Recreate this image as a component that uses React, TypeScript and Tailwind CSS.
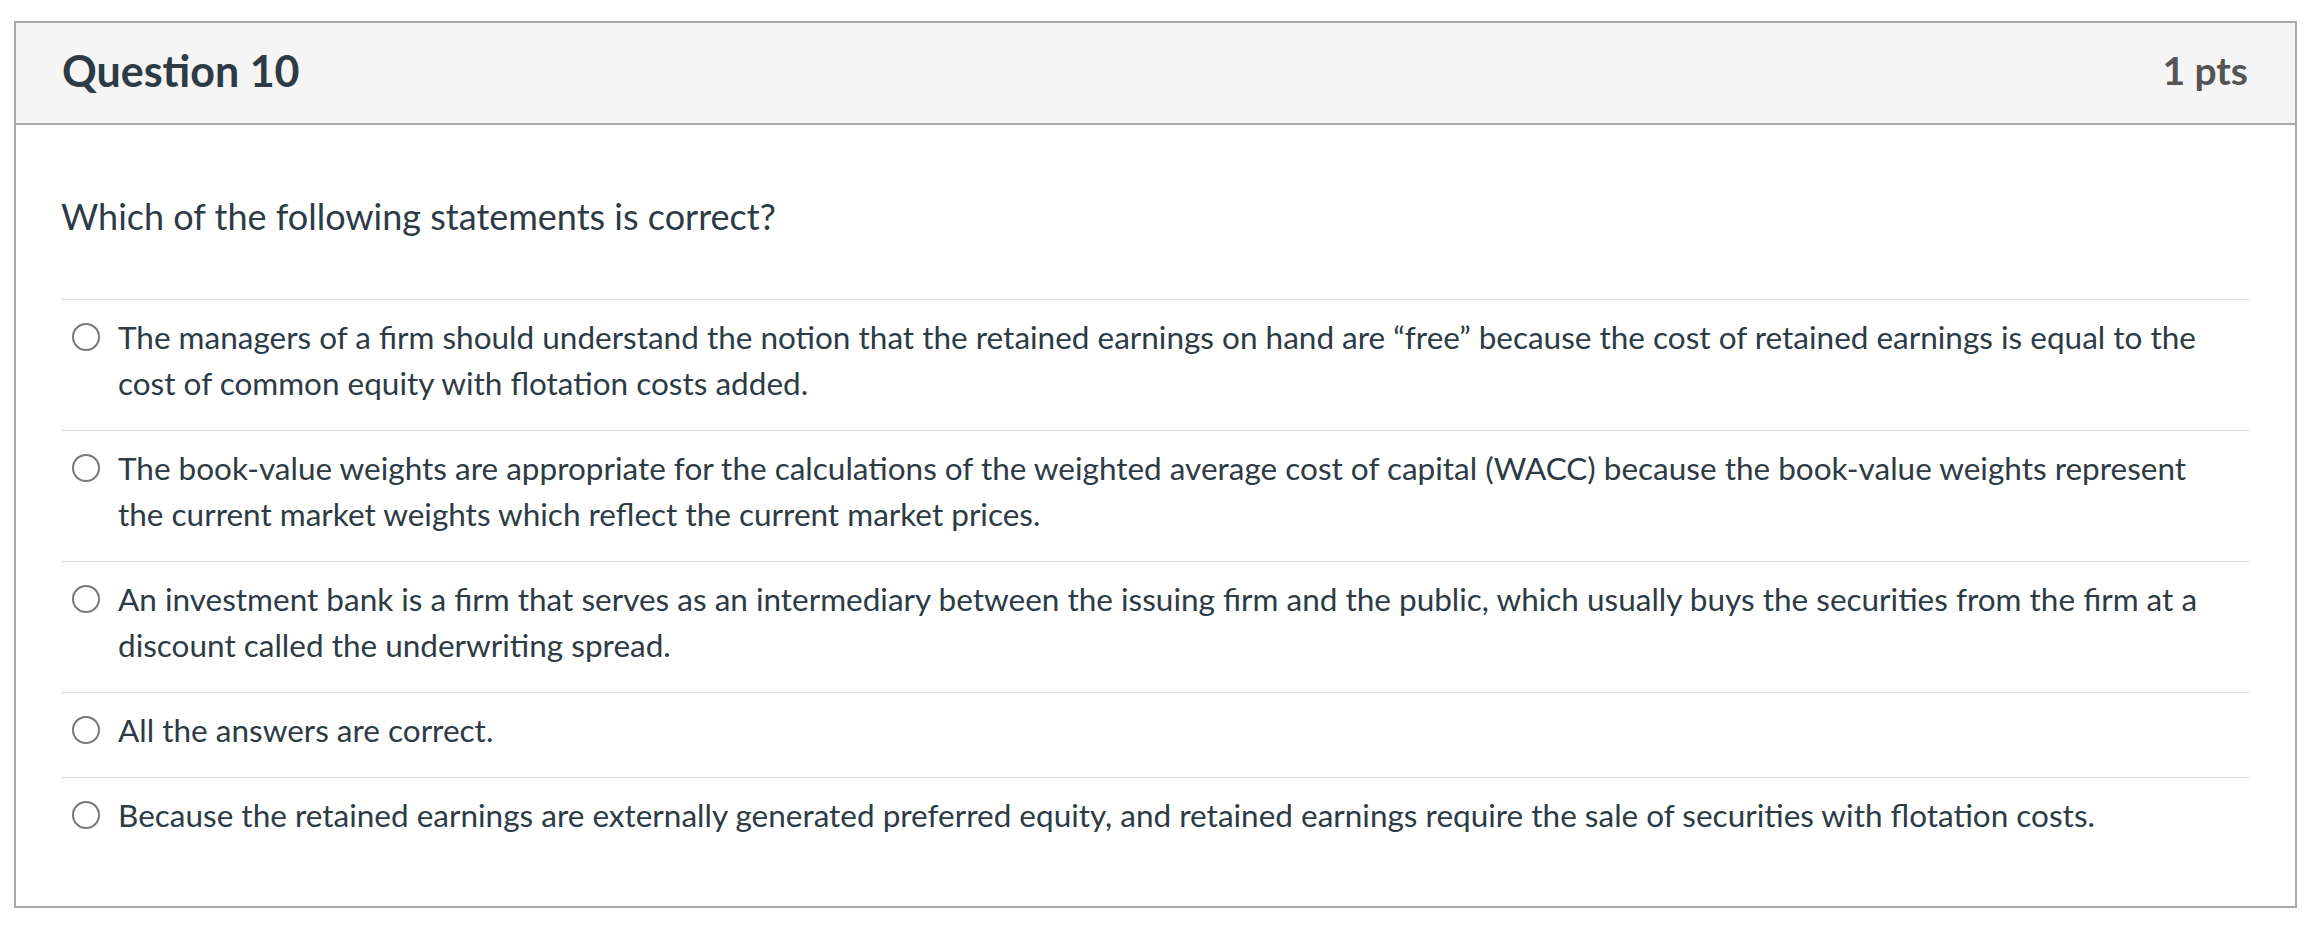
const answers = [
  "The managers of a firm should understand the notion that the retained earnings on hand are \u201cfree\u201d because the cost of retained earnings is equal to the cost of common equity with flotation costs added.",
  "The book-value weights are appropriate for the calculations of the weighted average cost of capital (WACC) because the book-value weights represent the current market weights which reflect the current market prices.",
  "An investment bank is a firm that serves as an intermediary between the issuing firm and the public, which usually buys the securities from the firm at a discount called the underwriting spread.",
  "All the answers are correct.",
  "Because the retained earnings are externally generated preferred equity, and retained earnings require the sale of securities with flotation costs.",
];

const Radio = () => (
  <span className="mt-[9px] h-[28px] w-[28px] shrink-0 rounded-full border-2 border-[#777777] bg-white" />
);

export default function App() {
  return (
    <div
      className="min-h-screen bg-white pl-[14px] pt-[21px] text-[#2d3b45]"
      style={{ fontFamily: "Lato, 'Open Sans', sans-serif" }}
    >
      <div className="w-[2283px] h-[887px] border-2 border-[#a9a9a9] bg-white">
        <div className="flex h-[102px] items-center justify-between border-b-2 border-[#a9a9a9] bg-[#f5f5f5] pl-[46px] pr-[47px] pb-[6px]">
          <h2 className="text-[43px] font-bold leading-none">Question 10</h2>
          <span className="text-[39px] font-bold leading-none text-[#555555]">1 pts</span>
        </div>

        <div className="pl-[45px] pr-[46px]">
          <p className="pt-[68px] pb-[60px] text-[36px] leading-[46px]">
            Which of the following statements is correct?
          </p>

          <div>
            {answers.map((a, i) => (
              <div
                key={i}
                className="flex items-start border-t border-[#dadada] pl-[11px] pr-[10px] pt-[14px] pb-[24px]"
              >
                <Radio />
                <div className="ml-[18px] text-[31.5px] leading-[46px]">{a}</div>
              </div>
            ))}
          </div>
        </div>
      </div>
    </div>
  );
}
